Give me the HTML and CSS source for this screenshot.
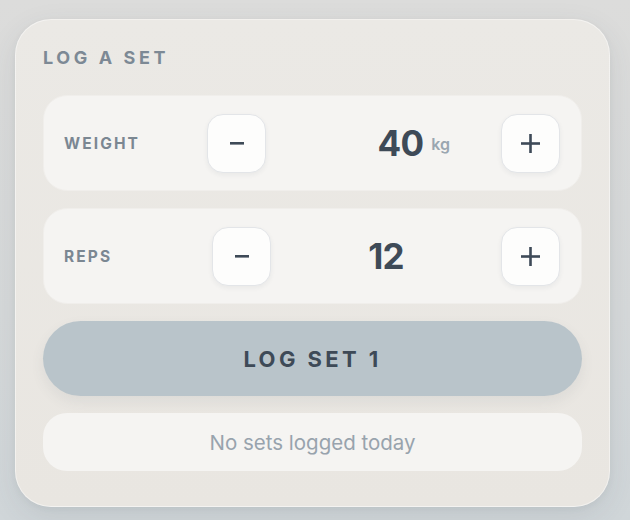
FILE: index.html
```html
<!DOCTYPE html>
<html lang="en">
<head>
<meta charset="utf-8">
<title>Log a set</title>
<link rel="stylesheet" href="styles.css">
</head>
<body>
<div class="card">
  <h2 class="title">LOG A SET</h2>
  <div class="stack">
    <div class="panel">
      <span class="label label-weight">WEIGHT</span>
      <button class="step" aria-label="decrease weight">
        <svg width="14" height="3" viewBox="0 0 14 3"><rect x="0" y="0" width="14" height="2.6" fill="#3e4a57"/></svg>
      </button>
      <div class="value value-weight"><span class="num">40</span><span class="unit">kg</span></div>
      <button class="step" aria-label="increase weight">
        <svg width="19" height="19" viewBox="0 0 19 19"><rect x="0" y="8.2" width="19" height="2.6" fill="#3e4a57"/><rect x="8.2" y="0" width="2.6" height="19" fill="#3e4a57"/></svg>
      </button>
    </div>
    <div class="panel">
      <span class="label label-reps">REPS</span>
      <button class="step" aria-label="decrease reps">
        <svg width="14" height="3" viewBox="0 0 14 3"><rect x="0" y="0" width="14" height="2.6" fill="#3e4a57"/></svg>
      </button>
      <div class="value value-reps"><span class="num">12</span></div>
      <button class="step" aria-label="increase reps">
        <svg width="19" height="19" viewBox="0 0 19 19"><rect x="0" y="8.2" width="19" height="2.6" fill="#3e4a57"/><rect x="8.2" y="0" width="2.6" height="19" fill="#3e4a57"/></svg>
      </button>
    </div>
    <button class="log">LOG SET 1</button>
    <div class="empty">No sets logged today</div>
  </div>
</div>
</body>
</html>
```
FILE: styles.css
```css
* { box-sizing: border-box; }
html, body { margin: 0; height: 100%; }
body {
  width: 630px;
  height: 520px;
  overflow: hidden;
  background: linear-gradient(180deg, #dcdcdb 0%, #d6d9da 60%, #d0d6d9 100%);
  font-family: "Inter", "Noto Sans", sans-serif;
  padding: 19px 20px 0 15px;
}
.card {
  width: 595px;
  height: 488px;
  border-radius: 36px;
  background: linear-gradient(180deg, #ebe9e5 0%, #e9e6e1 100%);
  border: 1px solid rgba(255,255,255,0.45);
  box-shadow: 0 10px 30px rgba(60,70,80,0.10), 0 2px 6px rgba(60,70,80,0.05);
  padding: 26px 27px 0 27px;
}
.title {
  margin: 0;
  font-size: 18px;
  line-height: 24px;
  font-weight: 700;
  letter-spacing: 3.6px;
  color: #7d8995;
}
.stack {
  margin-top: 25px;
  display: flex;
  flex-direction: column;
  gap: 17px;
}
.panel {
  height: 96px;
  border-radius: 24px;
  background: #f5f4f2;
  border: 1px solid #f0eeeb;
  display: flex;
  align-items: center;
  padding: 0 21px 0 20px;
}
.label {
  flex: none;
  font-size: 15.5px;
  font-weight: 700;
  letter-spacing: 2.1px;
  color: #7b8792;
}
.label-weight { width: 143px; }
.label-reps { width: 148px; }
.step {
  flex: none;
  width: 59px;
  height: 59px;
  border-radius: 16px;
  background: #fdfdfc;
  border: 1px solid #e3e5e8;
  box-shadow: 0 2px 5px rgba(40,50,60,0.06);
  display: flex;
  align-items: center;
  justify-content: center;
  padding: 0;
}
.step svg { display: block; }
.value {
  flex: 1;
  display: flex;
  align-items: center;
}
.value-weight { justify-content: flex-end; padding-right: 51px; }
.value-reps { justify-content: center; }
.num {
  font-size: 35px;
  font-weight: 700;
  color: #3e4a57;
  letter-spacing: -0.8px;
  line-height: 40px;
}
.unit {
  font-size: 16px;
  font-weight: 600;
  color: #9aa6b0;
  margin-left: 8px;
  margin-top: 2px;
}
.log {
  height: 75px;
  border: none;
  border-radius: 38px;
  background: #b9c4ca;
  box-shadow: 0 6px 14px rgba(60,75,90,0.08);
  font-family: "Inter", "Noto Sans", sans-serif;
  font-size: 22px;
  font-weight: 700;
  letter-spacing: 3.4px;
  color: #3e4a57;
  padding: 0;
}
.empty {
  height: 58px;
  border-radius: 24px;
  background: #f5f4f2;
  display: flex;
  align-items: center;
  justify-content: center;
  font-size: 20.5px;
  color: #98a3ad;
  letter-spacing: 0;
}
```
